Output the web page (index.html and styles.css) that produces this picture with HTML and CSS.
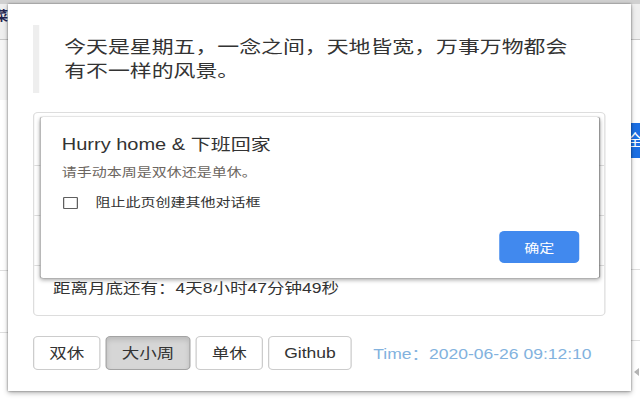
FILE: index.html
```html
<!DOCTYPE html>
<html lang="zh-CN">
<head>
<meta charset="utf-8">
<title>Hurry home</title>
<link rel="stylesheet" href="styles.css">
</head>
<body>
<div class="topbar"></div>
<div class="stage">
  <aside class="side side-left">
    <div class="side-head"><span class="side-glyph">菜</span></div>
    <div class="side-band"></div>
    <div class="side-gap g1"></div>
    <div class="side-line"></div>
    <div class="side-gap g2"></div>
    <div class="side-line"></div>
  </aside>

  <main class="popup">
    <div class="content">
      <blockquote class="quote">今天是星期五，一念之间，天地皆宽，万事万物都会有不一样的风景。</blockquote>

      <div class="panel">
        <div class="item item-first"></div>
        <div class="item"></div>
        <div class="item"></div>
        <div class="item item-last">距离月底还有：4天8小时47分钟49秒</div>
      </div>

      <div class="actions">
        <button class="btn">双休</button>
        <button class="btn active">大小周</button>
        <button class="btn">单休</button>
        <button class="btn">Github</button>
        <span class="time">Time：2020-06-26 09:12:10</span>
      </div>

      <div class="dialog">
        <div class="dlg-title">Hurry home &amp; 下班回家</div>
        <div class="dlg-msg">请手动本周是双休还是单休。</div>
        <label class="dlg-check"><input type="checkbox" class="cb"><span>阻止此页创建其他对话框</span></label>
        <div class="dlg-foot"><button class="dlg-ok">确定</button></div>
      </div>
    </div>
  </main>

  <aside class="side side-right">
    <div class="side-head"></div>
    <div class="side-gap r1"></div>
    <div class="blue"><span>全</span></div>
    <div class="side-gap r2"></div>
    <div class="side-line"></div>
    <div class="side-gap r3"></div>
    <div class="side-line"></div>
    <div class="side-gap r4"></div>
    <div class="tri"></div>
  </aside>
</div>
</body>
</html>
```
FILE: styles.css
```css
html, body {
  margin: 0;
  padding: 0;
}
body {
  width: 640px;
  height: 400px;
  overflow: hidden;
  background: #ffffff;
  font-family: "Liberation Sans", "Noto Sans CJK SC", sans-serif;
  font-size: 14px;
  color: #333;
}
.topbar {
  height: 4px;
  background: #d0d0d0;
}
.stage {
  display: flex;
  height: 396px;
}

/* background page strips */
.side {
  display: flex;
  flex-direction: column;
  overflow: hidden;
}
.side-left { width: 8px; }
.side-right { width: 9px; }
.side-head {
  height: 35px;
  background: #efefef;
  border-bottom: 1px solid #c8c8c8;
  display: flex;
  justify-content: flex-end;
  align-items: center;
  overflow: hidden;
}
.side-glyph {
  font-size: 13px;
  line-height: 14px;
  color: #23244f;
  font-weight: bold;
  margin-top: -12px;
  flex: none;
}
.side-band {
  height: 60px;
  background: #f6f6f6;
}
.side-gap.g1 { height: 170px; }
.side-gap.g2 { height: 61px; }
.side-line {
  height: 1px;
  background: #dedede;
}
.side-gap.r1 { height: 83px; }
.blue {
  height: 35px;
  background: #1b6fe3;
  color: #fff;
  font-size: 16px;
  line-height: 35px;
  overflow: hidden;
  white-space: nowrap;
  text-indent: -4px;
}
.side-gap.r2 { height: 111px; }
.side-gap.r3 { height: 70px; }
.side-gap.r4 { height: 27px; }
.tri {
  width: 0;
  height: 0;
  margin-left: 3px;
  border-top: 4px solid transparent;
  border-bottom: 4px solid transparent;
  border-right: 5px solid #b4b4b4;
}

/* popup window */
.popup {
  width: 623px;
  height: 387px;
  background: #fff;
  box-shadow: 0 0 2px rgba(0, 0, 0, 0.45), 0 2px 5px rgba(0, 0, 0, 0.3);
  position: relative;
  z-index: 1;
}
.content {
  width: 498.4px;
  height: 100%;
  box-sizing: border-box;
  padding: 21px 20px 0;
  transform: scaleX(1.25);
  transform-origin: 0 0;
  position: relative;
}

.quote {
  margin: 0 0 19px;
  padding: 10px 20px;
  border-left: 5px solid #eeeeee;
  font-size: 17.5px;
  line-height: 24px;
  color: #333;
}

.panel {
  border: 1px solid #dddddd;
  border-radius: 4px;
  margin-bottom: 20px;
}
.item {
  box-sizing: border-box;
  height: 50px;
  padding: 0 15px 5px;
  border-top: 1px solid #dddddd;
  display: flex;
  align-items: center;
  line-height: 20px;
}
.item-first {
  height: 52px;
  border-top: 0;
}

.actions {
  display: flex;
  align-items: center;
  gap: 4px;
}
.btn {
  height: 34px;
  padding: 6px 12px;
  font: inherit;
  font-size: 14px;
  line-height: 20px;
  color: #333;
  background: #fff;
  border: 1px solid #cccccc;
  border-radius: 4px;
  box-sizing: border-box;
}
.btn.active {
  background: #d6d6d6;
  border-color: #a3a3a3;
  box-shadow: inset 0 3px 5px rgba(0, 0, 0, 0.125);
}
.time {
  margin-left: 13px;
  color: #82b2de;
  font-size: 14px;
}

/* native alert dialog overlay */
.dialog {
  position: absolute;
  left: 26px;
  top: 113px;
  width: 447px;
  height: 161px;
  box-sizing: border-box;
  padding: 18px 16px 15px 17px;
  background: #fff;
  border-radius: 2px;
  box-shadow: 0 0 1px rgba(0, 0, 0, 0.5), 0 2px 4px rgba(0, 0, 0, 0.35);
  display: flex;
  flex-direction: column;
}
.dlg-title {
  font-size: 16px;
  line-height: 20px;
  color: #333;
}
.dlg-msg {
  margin-top: 9px;
  font-size: 12px;
  line-height: 18px;
  color: #6b6560;
}
.dlg-check {
  margin-top: 12px;
  display: flex;
  align-items: center;
  font-size: 12px;
  line-height: 18px;
  color: #333;
}
.cb {
  appearance: none;
  -webkit-appearance: none;
  width: 12px;
  height: 12px;
  margin: 0 14px 0 1px;
  border: 1.5px solid #5f5f5f;
  border-radius: 1px;
  box-sizing: border-box;
  background: #fff;
}
.dlg-foot {
  margin-top: auto;
  display: flex;
  justify-content: flex-end;
}
.dlg-ok {
  width: 64px;
  height: 32px;
  border: 0;
  border-radius: 4px;
  background: #4189ee;
  color: #fff;
  font: inherit;
  font-size: 12px;
}
```
